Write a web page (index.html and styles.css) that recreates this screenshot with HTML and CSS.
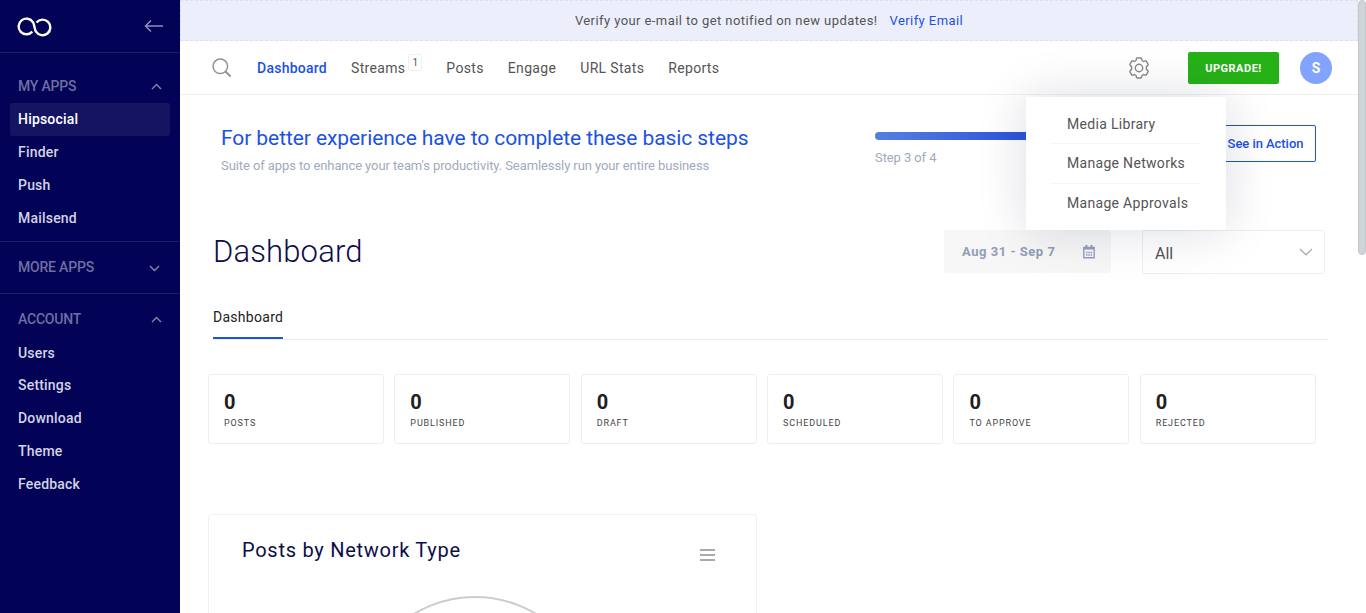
FILE: index.html
```
<!DOCTYPE html>
<html lang="en">
<head>
<meta charset="utf-8">
<title>Dashboard</title>
<link rel="stylesheet" href="styles.css">
</head>
<body>
<div class="app">
  <aside class="sidebar">
    <div class="brand">
      <svg width="36" height="22" viewBox="0 0 36 22" fill="none" stroke="#fff" stroke-width="2.4"><path d="M15.300 15.600A7.800 7.800 0 1 1 16 6.300C17.500 8.300 17.500 13.700 19 15.700A7.800 7.800 0 1 0 19.500 6.500"/></svg>
      <svg class="back" width="20" height="14" viewBox="0 0 20 14" fill="none" stroke="#8f8fbc" stroke-width="1.500"><path d="M19 7H2M7 1.500L1.500 7L7 12.500"/></svg>
    </div>
    <section class="group apps">
      <div class="group-title"><span>MY APPS</span><svg width="11" height="7" viewBox="0 0 11 7"><path d="M1 6L5.500 1.500L10 6"/></svg></div>
      <a class="item active">Hipsocial</a><a class="item">Finder</a><a class="item">Push</a><a class="item">Mailsend</a>
    </section>
    <section class="group">
      <div class="group-title down"><span>MORE APPS</span><svg width="11" height="7" viewBox="0 0 11 7"><path d="M1 1L5.500 5.500L10 1"/></svg></div>
    </section>
    <section class="group account">
      <div class="group-title"><span>ACCOUNT</span><svg width="11" height="7" viewBox="0 0 11 7"><path d="M1 6L5.500 1.500L10 6"/></svg></div>
      <a class="item">Users</a><a class="item">Settings</a><a class="item">Download</a><a class="item">Theme</a><a class="item">Feedback</a>
    </section>
  </aside>
  <main class="main">
    <div class="verify"><span>Verify your e-mail to get notified on new updates!</span><a>Verify Email</a></div>
    <header class="topbar">
      <svg class="search" width="20" height="20" viewBox="0 0 20 20" fill="none" stroke="#939393"><circle cx="8.300" cy="8.300" r="7.300" stroke-width="1.500"/><path d="M13.500 13.500L18.500 18.500" stroke-width="2"/></svg>
      <nav class="nav">
        <a class="current">Dashboard</a>
        <a class="streams">Streams<sup class="badge">1</sup></a>
        <a>Posts</a><a>Engage</a><a>URL Stats</a><a>Reports</a>
      </nav>
      <div class="tools">
        <div class="settings">
          <svg width="22" height="22" viewBox="0 0 22 22" fill="none" stroke="#8b8b8b" stroke-width="1.400" stroke-linejoin="round"><path d="M9.300 1h3.400q.8 0 .9.800l.3 1.700 1.700 1 1.700-.6q.7-.3 1.100.4l1.600 2.900q.4.700-.2 1.200l-1.400 1.200v2.800l1.400 1.200q.6.500.2 1.200l-1.600 2.900q-.4.700-1.100.4l-1.700-.6-1.700 1-.3 1.700q-.1.800-.9.800H9.300q-.8 0-.9-.8l-.3-1.700-1.700-1-1.700.6q-.7.300-1.100-.4L2 14.800q-.4-.7.200-1.200l1.400-1.200V9.600L2.200 8.400Q1.600 7.900 2 7.200l1.600-2.900q.4-.7 1.100-.4l1.700.6 1.700-1 .3-1.700q.1-.8.900-.8z"/><circle cx="11" cy="11" r="3.700"/></svg>
          <div class="menu"><a>Media Library</a><a>Manage Networks</a><a>Manage Approvals</a></div>
        </div>
        <button class="upgrade">UPGRADE!</button>
        <div class="avatar">S</div>
      </div>
    </header>
    <section class="promo">
      <div class="promo-text"><h2>For better experience have to complete these basic steps</h2><p>Suite of apps to enhance your team's productivity. Seamlessly run your entire business</p></div>
      <div class="progress"><div class="bar"></div><p>Step 3 of 4</p></div>
      <button class="action">See in Action</button>
    </section>
    <section class="heading">
      <h1>Dashboard</h1>
      <div class="date"><span>Aug 31 - Sep 7</span>
        <svg width="12" height="14" viewBox="0 0 12 14" fill="none" stroke="#929db8"><path d="M.8 2.500H11.200V12.800H.8Z" stroke-width="1.400"/><path d="M.8 3.500H11.200M3.500 0V3M8.500 0V3" stroke-width="2"/><path d="M3 7.500H9.200M3 10H9.200" stroke-width="1.500" stroke-dasharray="1.500 .8"/></svg>
      </div>
      <div class="select"><span>All</span><svg width="14" height="8" viewBox="0 0 14 8" fill="none" stroke="#aaa" stroke-width="1.200"><path d="M1 1L7 6.800L13 1"/></svg></div>
    </section>
    <div class="tabs"><a>Dashboard</a></div>
    <section class="stats">
      <div class="stat"><b>0</b><span>POSTS</span></div>
      <div class="stat"><b>0</b><span>PUBLISHED</span></div>
      <div class="stat"><b>0</b><span>DRAFT</span></div>
      <div class="stat"><b>0</b><span>SCHEDULED</span></div>
      <div class="stat"><b>0</b><span>TO APPROVE</span></div>
      <div class="stat"><b>0</b><span>REJECTED</span></div>
    </section>
    <section class="chart">
      <div class="chart-head"><h3>Posts by Network Type</h3><svg width="15" height="12" viewBox="0 0 15 12" stroke="#8e8e8e" stroke-width="1.700"><path d="M0 1H15M0 6H15M0 11H15"/></svg></div>
      <div class="donut"></div>
    </section>
  </main>
  <div class="scroll"><div class="thumb"></div></div>
</div>
</body>
</html>
```
FILE: styles.css
```
* { box-sizing: border-box; }
body { margin: 0; font-family: Roboto, sans-serif; font-size: 14px; color: #555; background: #fff; }
h1, h2, h3, p { margin: 0; font-weight: 400; }
button { font-family: inherit; margin: 0; padding: 0; }
svg { display: block; flex: none; }
.app { display: flex; height: 613px; overflow: hidden; }

.sidebar { width: 180px; flex: none; background: #020257; }
.brand { height: 53px; display: flex; align-items: center; justify-content: space-between; padding: 2px 16px 0 17px; border-bottom: 1px solid #1d1d6a; }
.brand .back { margin-top: -2px; }
.group { padding: 9px 10px; border-bottom: 1px solid #1d1d6a; }
.apps { padding: 17px 10px 6px; }
.account { border: 0; }
.group-title { height: 33px; display: flex; align-items: center; justify-content: space-between; padding: 0 8px 1px; color: #6f6f9f; font-weight: 500; letter-spacing: -.2px; }
.group-title svg { fill: none; stroke: #8585ae; stroke-width: 1.4; }
.down svg { margin: 2px 2px 0 0; }
.item { display: block; height: 33px; line-height: 33px; padding-left: 8px; color: #d3d3e2; font-weight: 500; letter-spacing: .2px; border-radius: 2px; }
.account .item { height: 32.8px; }
.account .group-title { margin-bottom: .6px; }
.item.active { background: #141463; color: #fff; }

.main { width: 1178px; flex: none; }
.verify { height: 41px; display: flex; align-items: center; justify-content: center; gap: 12px; background: #eceffb; border: 1px dashed #dfe0ee; font-size: 13px; letter-spacing: .42px; }
.verify a { color: #1b51e5; }
.topbar { height: 54px; display: flex; align-items: center; padding: 0 26px 0 32px; border-bottom: 1px solid #f0f0f0; }
.nav { display: flex; gap: 24px; margin-left: 25px; letter-spacing: .33px; }
.nav .current { color: #1b51e5; font-weight: 500; letter-spacing: .25px; }
.streams { display: flex; position: relative; padding-right: 17px; }
.badge { position: absolute; right: 0; top: -6px; width: 14px; height: 17px; line-height: 15px; border: 1px solid #f0f0f0; border-radius: 2px; text-align: center; font-size: 10px; letter-spacing: 0; }
.tools { margin-left: auto; display: flex; align-items: center; }
.settings { position: relative; margin-right: 38px; }
.menu { position: absolute; z-index: 2; top: 40px; left: -102px; width: 200px; height: 133px; padding: 8px 25px; background: #fff; border-radius: 2px; box-shadow: 0 0 50px rgba(8, 21, 66, .15); letter-spacing: .31px; }
.menu a { display: block; height: 39.500px; line-height: 39px; padding-left: 16px; border-bottom: 1px solid #f5f5f5; }
.menu a:last-child { border: 0; }
.upgrade { width: 91px; height: 32px; padding-top: 1px; border: 0; border-radius: 2px; background: #26b217; color: #fff; font-size: 11px; font-weight: 700; letter-spacing: .5px; }
.avatar { width: 32px; height: 32px; margin-left: 21px; border-radius: 50%; background: #82a3ff; color: #fff; font-weight: 700; line-height: 32px; text-align: center; }

.promo { height: 135px; display: flex; align-items: flex-start; padding: 30px 42px 0 41px; }
.promo-text { width: 654px; }
.promo h2 { font-size: 21px; line-height: 26px; letter-spacing: -.08px; color: #1b51e5; }
.promo p { font-size: 13px; line-height: 18px; letter-spacing: -.09px; color: #a1aabd; margin-top: 6px; }
.progress { width: 270px; }
.bar { height: 8px; width: 240px; margin-top: 7px; border-radius: 4px; background: linear-gradient(90deg, #5480df, #1238da); }
.promo .progress p { margin-top: 9px; }
.action { margin-left: auto; width: 110px; height: 37px; padding-left: 9px; border: 1px solid #1b51e5; border-radius: 2px; background: #fff; color: #1b51e5; font-size: 13px; font-weight: 500; letter-spacing: -.05px; }

.heading { height: 44px; display: flex; align-items: flex-start; padding: 0 33px; }
h1 { flex: 1; font-size: 31px; font-weight: 300; line-height: 43px; letter-spacing: .15px; color: #0d0d4b; }
.date { width: 167px; height: 43px; display: flex; align-items: center; justify-content: space-between; padding: 0 16px 0 18px; background: #f7f7f7; border-radius: 3px; color: #929db8; font-size: 13px; font-weight: 700; letter-spacing: .52px; }
.select { width: 183px; height: 44px; margin-left: 31px; display: flex; align-items: center; justify-content: space-between; padding: 2px 11px 0 12px; border: 1px solid #eee; border-radius: 3px; font-size: 16px; }
.select svg { margin-top: -3px; }
.tabs { height: 42px; margin: 24px 30px 0 33px; border-bottom: 1px solid #eee; display: flex; }
.tabs a { height: 41px; line-height: 38px; border-bottom: 2px solid #1b51e5; color: #222; letter-spacing: .28px; }
.stats { display: grid; grid-template-columns: repeat(6, 176px); column-gap: 10.350px; margin: 34px 0 0 28px; }
.stat { height: 70px; padding: 15px; border: 1px solid #eee; border-radius: 3px; }
.stat b { display: block; font-size: 20px; line-height: 24px; font-weight: 700; color: #212121; }
.stat span { display: block; margin-top: 1px; font-size: 9px; line-height: 16px; letter-spacing: .87px; color: #444; }
.chart { width: 549px; height: 300px; margin: 70px 0 0 28px; border: 1px solid #f1f1f1; border-radius: 3px; }
.chart-head { height: 81px; display: flex; justify-content: space-between; padding: 20px 41px 0 33px; }
.chart-head svg { margin-top: 14px; }
h3 { font-size: 20px; line-height: 30px; letter-spacing: .73px; color: #0d0d4b; }
.donut { width: 240px; height: 240px; margin-left: 146px; border: 2px solid #ccc; border-radius: 50%; }

.scroll { width: 8px; flex: none; background: #fff; }
.thumb { height: 255px; background: #ced5d9; border: 1px solid #c5c8ca; border-radius: 4px; }
```
